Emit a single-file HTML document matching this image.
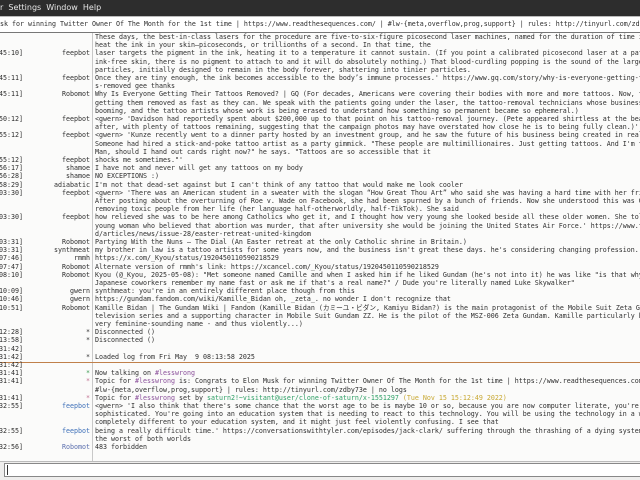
<!DOCTYPE html>
<html><head><meta charset="utf-8"><style>
*{margin:0;padding:0;box-sizing:border-box}
body{width:640px;height:480px;overflow:hidden;background:#efeeed;font-family:"DejaVu Sans Mono","Liberation Mono","Noto Sans CJK JP",monospace;font-size:6.65px;color:#2e2e2e;position:relative}
#menu{position:absolute;left:0;top:0;width:640px;height:16px;background:#2d2d2d;color:#e6e6e6;font-family:"DejaVu Sans","Liberation Sans",sans-serif;font-size:8px;line-height:16px;white-space:pre}
#topic{position:absolute;left:0;top:16px;width:640px;height:17px;background:#fff;border-top:1px solid #bbb;border-bottom:1px solid #777;line-height:15px;white-space:pre;overflow:hidden}
#chat{position:absolute;left:0;top:33px;width:640px;height:429px;background:#fbfbfa;border-bottom:1px solid #bbb;overflow:hidden}
#sep{position:absolute;left:92px;top:0;width:1px;height:429px;background:#c8c8c8}
.r{position:absolute;left:0;height:8.2px;line-height:8.2px;white-space:pre;width:640px}
.t{position:absolute;right:617px;}
.n{position:absolute;right:550px;}
.m{position:absolute;left:95px;}
#orange{position:absolute;left:0;top:328.5px;width:640px;height:1px;background:#c0804a}
#input{position:absolute;left:4px;top:463px;width:640px;height:14px;background:#fff;border:1px solid #888}
#caret{position:absolute;left:7px;top:465px;width:1px;height:10px;background:#333}
.b{color:#3d6fb8}.p{color:#8a4f9a}.g{color:#2ea066}.y{color:#c8a832}.s{color:#c07090}.gs{color:#3a9a50}
</style></head><body>
<div id="menu">r  Settings  Window  Help</div>
<div id="topic">sk for winning Twitter Owner Of The Month for the 1st time | https://www.readthesequences.com/ | #lw-{meta,overflow,prog,support} | rules: http://tinyurl.com/zdby73e |</div>
<div id="chat">
<div id="sep"></div>
<div id="orange"></div>
<div class="r" style="top:0px"><span class="m">These days, the best-in-class lasers for the procedure are five-to-six-figure picosecond laser machines, named for the duration of time it takes to</span></div>
<div class="r" style="top:8.2px"><span class="m">heat the ink in your skin—picoseconds, or trillionths of a second. In that time, the</span></div>
<div class="r" style="top:16.4px"><span class="t">45:10]</span><span class="n">feepbot</span><span class="m">laser targets the pigment in the ink, heating it to a temperature it cannot sustain. (If you point a calibrated picosecond laser at a patch of</span></div>
<div class="r" style="top:24.6px"><span class="m">ink-free skin, there is no pigment to attach to and it will do absolutely nothing.) That blood-curdling popping is the sound of the larger ink</span></div>
<div class="r" style="top:32.8px"><span class="m">particles, initially designed to remain in the body forever, shattering into tinier particles.</span></div>
<div class="r" style="top:41px"><span class="t">45:11]</span><span class="n">feepbot</span><span class="m">Once they are tiny enough, the ink becomes accessible to the body’s immune processes.' https://www.gq.com/story/why-is-everyone-getting-their-tattoo</span></div>
<div class="r" style="top:49.2px"><span class="m">s-removed gee thanks</span></div>
<div class="r" style="top:57.4px"><span class="t">45:11]</span><span class="n">Robomot</span><span class="m">Why Is Everyone Getting Their Tattoos Removed? | GQ (For decades, Americans were covering their bodies with more and more tattoos. Now, they're</span></div>
<div class="r" style="top:65.6px"><span class="m">getting them removed as fast as they can. We speak with the patients going under the laser, the tattoo-removal technicians whose business is</span></div>
<div class="r" style="top:73.8px"><span class="m">booming, and the tattoo artists whose work is being erased to understand how something so permanent became so ephemeral.)</span></div>
<div class="r" style="top:82px"><span class="t">50:12]</span><span class="n">feepbot</span><span class="m">&lt;gwern&gt; 'Davidson had reportedly spent about $200,000 up to that point on his tattoo-removal journey. (Pete appeared shirtless at the beach shortly</span></div>
<div class="r" style="top:90.2px"><span class="m">after, with plenty of tattoos remaining, suggesting that the campaign photos may have overstated how close he is to being fully clean.)'</span></div>
<div class="r" style="top:98.4px"><span class="t">55:12]</span><span class="n">feepbot</span><span class="m">&lt;gwern&gt; 'Kunze recently went to a dinner party hosted by an investment group, and he saw the future of his business being created in real time.</span></div>
<div class="r" style="top:106.6px"><span class="m">Someone had hired a stick-and-poke tattoo artist as a party gimmick. "These people are multimillionaires. Just getting tattoos. And I'm thinking,</span></div>
<div class="r" style="top:114.8px"><span class="m">Man, should I hand out cards right now?" he says. "Tattoos are so accessible that it</span></div>
<div class="r" style="top:123px"><span class="t">55:12]</span><span class="n">feepbot</span><span class="m">shocks me sometimes."'</span></div>
<div class="r" style="top:131.2px"><span class="t">56:17]</span><span class="n">shamoe</span><span class="m">I have not and never will get any tattoos on my body</span></div>
<div class="r" style="top:139.4px"><span class="t">56:28]</span><span class="n">shamoe</span><span class="m">NO EXCEPTIONS :)</span></div>
<div class="r" style="top:147.6px"><span class="t">58:29]</span><span class="n">adiabatic</span><span class="m">I'm not that dead-set against but I can't think of any tattoo that would make me look cooler</span></div>
<div class="r" style="top:155.8px"><span class="t">03:30]</span><span class="n">feepbot</span><span class="m">&lt;gwern&gt; 'There was an American student in a sweater with the slogan “How Great Thou Art” who said she was having a hard time with her friendships.</span></div>
<div class="r" style="top:164px"><span class="m">After posting about the overturning of Roe v. Wade on Facebook, she had been spurned by a bunch of friends. Now she understood this was God</span></div>
<div class="r" style="top:172.2px"><span class="m">removing toxic people from her life (her language half-otherworldly, half-TikTok). She said</span></div>
<div class="r" style="top:180.4px"><span class="t">03:30]</span><span class="n">feepbot</span><span class="m">how relieved she was to be here among Catholics who get it, and I thought how very young she looked beside all these older women. She told us, a</span></div>
<div class="r" style="top:188.6px"><span class="m">young woman who believed that abortion was murder, that after university she would be joining the United States Air Force.' https://www.thedial.worl</span></div>
<div class="r" style="top:196.8px"><span class="m">d/articles/news/issue-28/easter-retreat-united-kingdom</span></div>
<div class="r" style="top:205px"><span class="t">03:31]</span><span class="n">Robomot</span><span class="m">Partying With the Nuns – The Dial (An Easter retreat at the only Catholic shrine in Britain.)</span></div>
<div class="r" style="top:213.2px"><span class="t">03:31]</span><span class="n">synthmeat</span><span class="m">my brother in law is a tattoo artists for some years now, and the business isn't great these days. he's considering changing profession.</span></div>
<div class="r" style="top:221.4px"><span class="t">07:46]</span><span class="n">rmmh</span><span class="m">https://x.com/_Kyou/status/1920450110590218529</span></div>
<div class="r" style="top:229.6px"><span class="t">07:47]</span><span class="n">Robomot</span><span class="m">Alternate version of rmmh's link: https://xcancel.com/_Kyou/status/1920450110590218529</span></div>
<div class="r" style="top:237.8px"><span class="t">08:10]</span><span class="n">Robomot</span><span class="m">Kyou (@_Kyou, 2025-05-08): "Met someone named Camille and when I asked him if he liked Gundam (he's not into it) he was like "is that why all my</span></div>
<div class="r" style="top:246px"><span class="m">Japanese coworkers remember my name fast or ask me if that's a real name?" / Dude you're literally named Luke Skywalker"</span></div>
<div class="r" style="top:254.2px"><span class="t">10:09]</span><span class="n">gwern</span><span class="m">synthmeat: you're in an entirely different place though from this</span></div>
<div class="r" style="top:262.4px"><span class="t">10:46]</span><span class="n">gwern</span><span class="m">https://gundam.fandom.com/wiki/Kamille_Bidan oh, _zeta_. no wonder I don't recognize that</span></div>
<div class="r" style="top:270.6px"><span class="t">10:51]</span><span class="n">Robomot</span><span class="m">Kamille Bidan | The Gundam Wiki | Fandom (Kamille Bidan (カミーユ・ビダン, Kamiyu Bidan?) is the main protagonist of the Mobile Suit Zeta Gundam</span></div>
<div class="r" style="top:278.8px"><span class="m">television series and a supporting character in Mobile Suit Gundam ZZ. He is the pilot of the MSZ-006 Zeta Gundam. Kamille particularly hated his</span></div>
<div class="r" style="top:287px"><span class="m">very feminine-sounding name - and thus violently...)</span></div>
<div class="r" style="top:295.2px"><span class="t">12:28]</span><span class="n">*</span><span class="m">Disconnected ()</span></div>
<div class="r" style="top:303.4px"><span class="t">13:58]</span><span class="n">*</span><span class="m">Disconnected ()</span></div>
<div class="r" style="top:311.6px"><span class="t">31:42]</span></div>
<div class="r" style="top:319.8px"><span class="t">31:42]</span><span class="n">*</span><span class="m">Loaded log from Fri May  9 08:13:58 2025</span></div>
<div class="r" style="top:328px"><span class="t">31:42]</span></div>
<div class="r" style="top:336.2px"><span class="t">31:41]</span><span class="n gs">*</span><span class="m">Now talking on <span class="p">#lesswrong</span></span></div>
<div class="r" style="top:344.4px"><span class="t">31:41]</span><span class="n s">*</span><span class="m">Topic for <span class="p">#lesswrong</span> is: Congrats to Elon Musk for winning Twitter Owner Of The Month for the 1st time | https://www.readthesequences.com/ |</span></div>
<div class="r" style="top:352.6px"><span class="m">#lw-{meta,overflow,prog,support} | rules: http://tinyurl.com/zdby73e | no logs</span></div>
<div class="r" style="top:360.8px"><span class="t">31:41]</span><span class="n s">*</span><span class="m">Topic for <span class="p">#lesswrong</span> set by <span class="g">saturn2!~visitant@user/clone-of-saturn/x-1551297</span> <span class="y">(Tue Nov 15 15:12:49 2022)</span></span></div>
<div class="r" style="top:369px"><span class="t">32:55]</span><span class="n b">feepbot</span><span class="m">&lt;gwern&gt; 'I also think that there's some chance that the worst age to be is maybe 10 or so, because you are now computer literate, you're</span></div>
<div class="r" style="top:377.2px"><span class="m">sophisticated. You're going into an education system that is needing to react to this technology. You will be using the technology in a way</span></div>
<div class="r" style="top:385.4px"><span class="m">completely different to your education system, and it might just feel violently confusing. I see that</span></div>
<div class="r" style="top:393.6px"><span class="t">32:55]</span><span class="n b">feepbot</span><span class="m">being a really difficult time.' https://conversationswithtyler.com/episodes/jack-clark/ suffering through the thrashing of a dying system getting</span></div>
<div class="r" style="top:401.8px"><span class="m">the worst of both worlds</span></div>
<div class="r" style="top:410px"><span class="t">32:56]</span><span class="n" style="color:#5b6fae">Robomot</span><span class="m">483 forbidden</span></div>
</div>
<div id="input"></div>
<div id="caret"></div>
</body></html>
